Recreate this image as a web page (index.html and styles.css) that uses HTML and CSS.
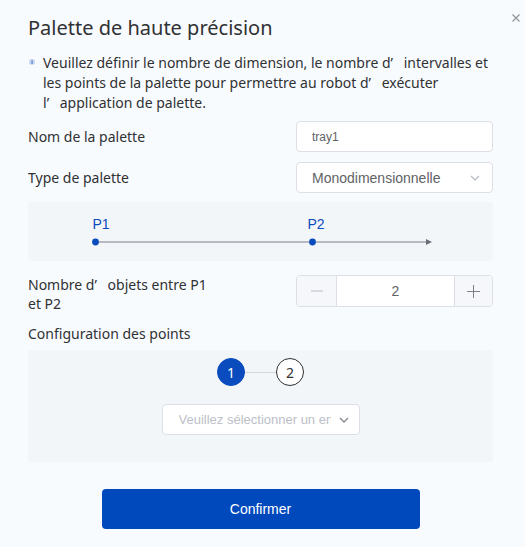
FILE: index.html
```html
<!DOCTYPE html>
<html lang="fr">
<head>
<meta charset="utf-8">
<title>Palette de haute précision</title>
<link rel="stylesheet" href="styles.css">
</head>
<body>
<div class="dialog">
  <button class="close" aria-label="Fermer">
    <svg width="8" height="8" viewBox="0 0 8 8"><path d="M0.5 0.5 L7.5 7.5 M7.5 0.5 L0.5 7.5" stroke="#909399" stroke-width="1.2" fill="none"/></svg>
  </button>
  <h1 class="title">Palette de haute précision</h1>
  <div class="tip">
    <svg class="tip-icon" width="6" height="6" viewBox="0 0 6 6"><circle cx="3" cy="3" r="3" fill="#c6d6f0"/><rect x="2.6" y="2.4" width="0.9" height="2.4" fill="#1d57c4"/><rect x="2.6" y="1.1" width="0.9" height="0.8" fill="#1d57c4"/></svg>
    <p class="tip-text">Veuillez définir le nombre de dimension, le nombre d<span class="apos">’</span> intervalles et<br>les points de la palette pour permettre au robot d<span class="apos">’</span> exécuter<br>l<span class="apos">’</span> application de palette.</p>
  </div>

  <div class="row">
    <label class="label">Nom de la palette</label>
    <div class="field input">tray1</div>
  </div>
  <div class="row">
    <label class="label">Type de palette</label>
    <div class="field select">
      <span>Monodimensionnelle</span>
      <svg class="chev" width="10" height="6" viewBox="0 0 10 6"><path d="M1 1 L5 5 L9 1" stroke="#b4b8c0" stroke-width="1.1" fill="none"/></svg>
    </div>
  </div>

  <div class="diagram">
    <svg width="465" height="59" viewBox="0 0 465 59">
      <text x="64.5" y="27" class="pt">P1</text>
      <text x="279.5" y="27" class="pt">P2</text>
      <line x1="67" y1="40" x2="398" y2="40" stroke="#7d8089" stroke-width="1.2"/>
      <path d="M398 37 L404 40 L398 43 Z" fill="#6b6e76"/>
      <circle cx="67.5" cy="40" r="3.4" fill="#0a4bbd"/>
      <circle cx="284.5" cy="40" r="3.4" fill="#0a4bbd"/>
    </svg>
  </div>

  <div class="row row-top">
    <label class="label label-wrap">Nombre d<span class="apos">’</span> objets entre P1 et P2</label>
    <div class="field number">
      <span class="num-btn minus">
        <svg width="12" height="2" viewBox="0 0 12 2"><rect width="12" height="1" y="0.5" fill="#b8bcc4"/></svg>
      </span>
      <span class="num-val">2</span>
      <span class="num-btn plus">
        <svg width="13" height="13" viewBox="0 0 13 13"><rect width="13" height="1" y="6" fill="#7d8089"/><rect width="1" height="13" x="6" fill="#7d8089"/></svg>
      </span>
    </div>
  </div>

  <div class="section-label">Configuration des points</div>
  <div class="points">
    <div class="steps">
      <span class="step active">1</span>
      <span class="step-line"></span>
      <span class="step">2</span>
    </div>
    <div class="field select point-select">
      <span class="placeholder">Veuillez sélectionner un en</span>
      <svg class="chev" width="10" height="6" viewBox="0 0 10 6"><path d="M1 1 L5 5 L9 1" stroke="#8d9098" stroke-width="1.5" fill="none"/></svg>
    </div>
  </div>

  <div class="footer">
    <button class="confirm">Confirmer</button>
  </div>
</div>
</body>
</html>
```

FILE: styles.css
```css
* { box-sizing: border-box; }
html, body { margin: 0; padding: 0; }
body {
  background: #f8fbfe;
  font-family: "Noto Sans", "Liberation Sans", Arial, sans-serif;
  color: #303133;
  width: 525px;
  height: 547px;
  overflow: hidden;
}
.apos {
  margin-right: 7px;
}
.dialog {
  position: relative;
  padding: 14px 32px 0 28px;
}
.close {
  position: absolute;
  top: 13px;
  right: 4px;
  width: 10px;
  height: 10px;
  padding: 0;
  border: 0;
  background: none;
  display: flex;
  align-items: center;
  justify-content: center;
}
.title {
  margin: 0;
  font-size: 20px;
  line-height: 28px;
  font-weight: 400;
  color: #303133;
}
.tip {
  margin-top: 11px;
  display: flex;
  align-items: flex-start;
}
.tip-icon {
  flex: none;
  margin: 6px 8px 0 1px;
}
.tip-text {
  margin: 0;
  font-size: 14px;
  line-height: 20px;
  white-space: nowrap;
  color: #303133;
}
.row {
  display: flex;
  align-items: center;
  justify-content: space-between;
  margin-top: 10px;
}
.tip + .row { margin-top: 8px; }
.label {
  font-size: 14px;
  line-height: 20px;
  color: #303133;
}
.field {
  width: 197px;
  height: 31px;
  background: #fff;
  border: 1px solid #dcdfe6;
  border-radius: 4px;
  font-family: "Liberation Sans", Arial, sans-serif;
  font-size: 14px;
  display: flex;
  align-items: center;
}
.input {
  padding-left: 15px;
  font-size: 12px;
  color: #606266;
}
.select {
  padding: 0 12px 0 15px;
  justify-content: space-between;
  color: #606266;
}
.diagram {
  margin-top: 9px;
  height: 59px;
  background: #f3f6f9;
  border-radius: 4px;
}
.diagram svg { display: block; }
.pt {
  font-family: "Liberation Sans", Arial, sans-serif;
  font-size: 14px;
  fill: #0a4bbd;
}
.row-top {
  align-items: flex-start;
  margin-top: 14px;
}
.label-wrap {
  width: 190px;
  line-height: 19px;
}
.number {
  height: 32px;
  padding: 0;
  overflow: hidden;
}
.num-btn {
  height: 100%;
  background: #f5f7fa;
  display: flex;
  align-items: center;
  justify-content: center;
}
.minus { width: 40px; border-right: 1px solid #dcdfe6; }
.plus { width: 38px; border-left: 1px solid #dcdfe6; }
.num-val {
  flex: 1;
  text-align: center;
  color: #606266;
  font-size: 14px;
}
.section-label {
  margin-top: 11px;
  font-size: 14px;
  line-height: 20px;
  color: #303133;
}
.points {
  margin-top: 6px;
  height: 112px;
  background: #f3f6f9;
  border-radius: 4px;
  padding-top: 8px;
  display: flex;
  flex-direction: column;
  align-items: center;
}
.steps {
  display: flex;
  align-items: center;
}
.step {
  width: 28px;
  height: 28px;
  border-radius: 50%;
  border: 1px solid #303133;
  display: flex;
  align-items: center;
  justify-content: center;
  font-size: 14px;
  color: #303133;
  background: #fff;
}
.step.active {
  background: #0a4bbd;
  border-color: #0a4bbd;
  color: #fff;
}
.step-line {
  width: 31px;
  height: 1px;
  background: #d4d7de;
}
.point-select {
  margin-top: 18px;
  width: 198px;
  padding: 0 10px 0 16px;
}
.placeholder {
  color: #bcc0c8;
  font-size: 13px;
  white-space: nowrap;
  overflow: hidden;
  width: 152px;
}
.footer {
  display: flex;
  justify-content: center;
  margin-top: 27px;
}
.confirm {
  width: 318px;
  height: 40px;
  border: 0;
  border-radius: 4px;
  background: #0049bd;
  color: #fff;
  font-family: "Liberation Sans", Arial, sans-serif;
  font-size: 14px;
}
```
